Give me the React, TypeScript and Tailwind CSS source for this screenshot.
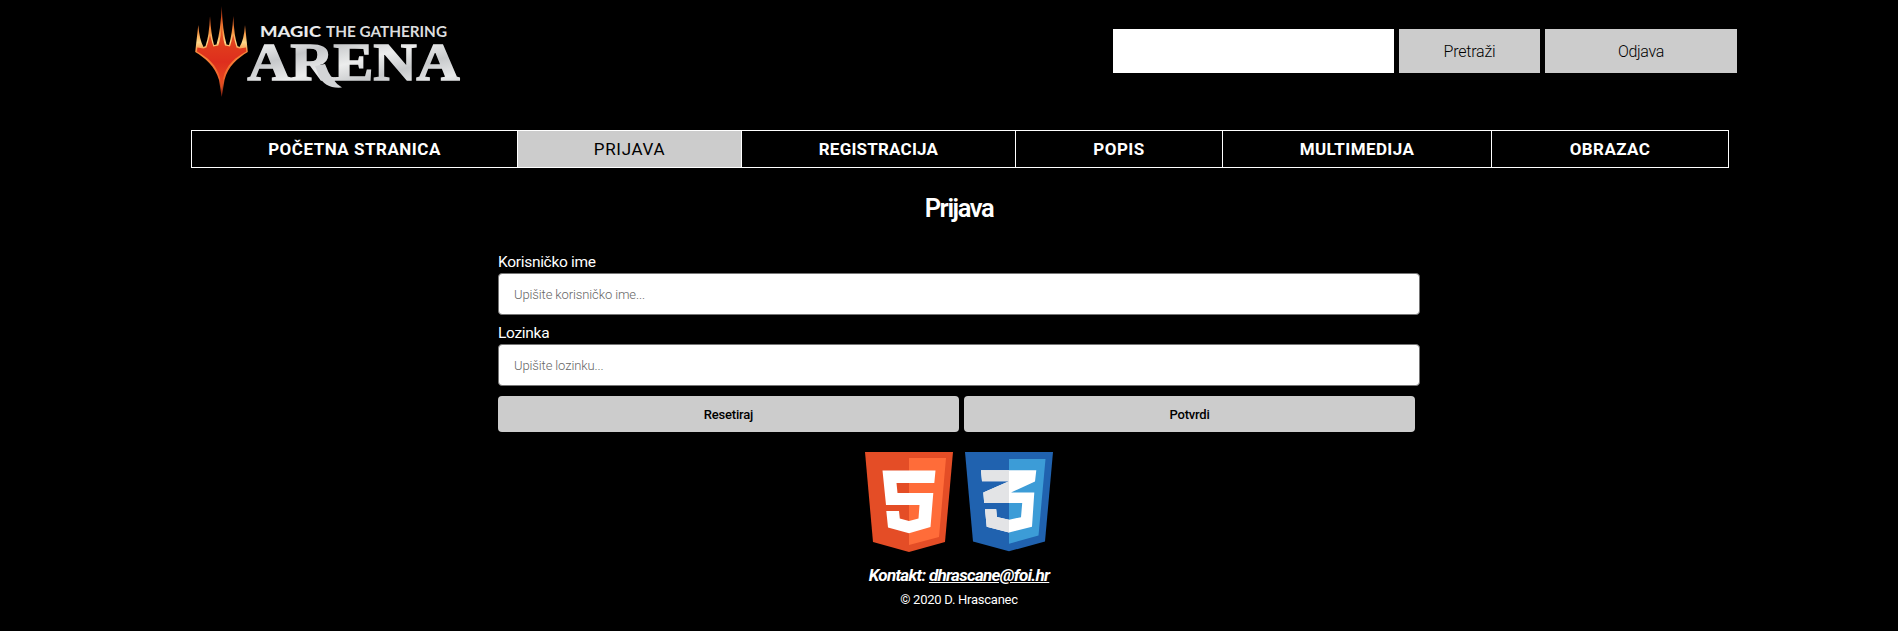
const navItems = [
  { label: 'POČETNA STRANICA', width: 'w-[326px]', spacing: 'tracking-[0.5px]' },
  { label: 'PRIJAVA', width: 'w-[224px]', active: true, spacing: 'tracking-[0.7px]' },
  { label: 'REGISTRACIJA', width: 'w-[274px]', spacing: 'tracking-[0.2px]' },
  { label: 'POPIS', width: 'w-[207px]', spacing: 'tracking-[0.5px]' },
  { label: 'MULTIMEDIJA', width: 'w-[269px]', spacing: 'tracking-[0.4px]' },
  { label: 'OBRAZAC', width: 'w-[237px]', spacing: 'tracking-[0.4px]' },
];

function Logo() {
  return (
    <svg width="285" height="105" viewBox="0 0 285 105" role="img" aria-label="Magic The Gathering Arena">
      <defs>
        <linearGradient id="flame" gradientUnits="userSpaceOnUse" x1="0" y1="6" x2="0" y2="97">
          <stop offset="0" stopColor="#8c2410" />
          <stop offset="0.14" stopColor="#d9501c" />
          <stop offset="0.3" stopColor="#f79a45" />
          <stop offset="0.4" stopColor="#ffd98a" />
          <stop offset="0.5" stopColor="#f68a3c" />
          <stop offset="0.8" stopColor="#f0602a" />
          <stop offset="1" stopColor="#7c1c0e" />
        </linearGradient>
        <linearGradient id="ember" gradientUnits="userSpaceOnUse" x1="0" y1="20" x2="0" y2="90">
          <stop offset="0" stopColor="#ee6a26" />
          <stop offset="0.4" stopColor="#e03a1d" />
          <stop offset="0.6" stopColor="#de2e1d" />
          <stop offset="1" stopColor="#e9521f" />
        </linearGradient>
        <linearGradient id="steel" x1="0" y1="0" x2="1" y2="1">
          <stop offset="0" stopColor="#c9cbcd" />
          <stop offset="0.15" stopColor="#e9eaeb" />
          <stop offset="0.3" stopColor="#c6c8ca" />
          <stop offset="0.5" stopColor="#eceded" />
          <stop offset="0.68" stopColor="#c8cacc" />
          <stop offset="0.85" stopColor="#e8e9ea" />
          <stop offset="1" stopColor="#c4c6c8" />
        </linearGradient>
      </defs>
      <path
        d="M36.700 6 Q37.500 30 41.500 44.500 L44 45 Q47.300 34 48.300 16 Q49 36 52.500 46 L54.500 47 Q59 40 60 25 L62.800 52 C53 58 43 66 39.500 80 L36.700 97 L34 80 C30 66 20 58 10.200 52 L13.300 25 Q14.500 40 18.500 47 L20.500 46 Q24.200 36 25 16 Q26 34 29 45 L31.500 44.500 Q35.800 30 36.700 6 Z"
        fill="url(#flame)"
      />
      <path
        d="M36.700 24 Q37.500 38 40 45.500 L45 46.500 L48.200 35 L51.500 47.500 L54.500 48.500 L61 47.500 L61.300 51.500 C51 57 41 65 38.300 78 L36.700 90 L35 78 C32 65 22 57 12 51.500 L12.300 47.500 L18.500 48.500 L21.500 47.500 L25 35 L28.300 46.500 L33.300 45.500 Q36 38 36.700 24 Z"
        fill="url(#ember)"
      />
      <text x="75" y="36.500" textLength="61" lengthAdjust="spacingAndGlyphs" fontFamily="Lato, sans-serif" fontWeight="900" fontSize="14.500" fill="#e9eaeb">
        MAGIC
      </text>
      <text x="141" y="36.500" textLength="121" lengthAdjust="spacingAndGlyphs" fontFamily="Lato, sans-serif" fontWeight="700" fontSize="14.500" fill="#dcddde">
        THE GATHERING
      </text>
      <text x="62.500" y="79.500" textLength="212" lengthAdjust="spacingAndGlyphs" fontFamily="'Liberation Serif', serif" fontWeight="700" fontSize="52" fill="url(#steel)" stroke="url(#steel)" strokeWidth="1.6">
        ARENA
      </text>
      <path d="M130 66 L140 64 Q146 81 157 87.500 Q140 89 134 76 Z" fill="#d3d5d7" />
    </svg>
  );
}

function Html5Badge() {
  return (
    <svg width="88" height="100" viewBox="0 0 88 100" aria-label="HTML5">
      <path d="M0 0H88L80 90L44 100L8 90Z" fill="#e44d26" />
      <path d="M44 6H81L74 85L44 93Z" fill="#ff6c39" />
      <path d="M17.500 18.500H70.500L69.300 31H31.500L32.500 41H68.300L65.500 75L44 81.300L23 75.500L21.300 59H34L34.800 66.500L44 69L53.500 66.500L54.500 53H21Z" fill="#fff" />
    </svg>
  );
}

function Css3Badge() {
  const emblem =
    'M16 18.300H71.300L70 29.500L46 40.500H69.300L67 74.700L44 80.600L21.700 74.700L20 57.300H31.200L31.900 65L44 67.800L56 65.200L57.200 51H19.200L18.300 40.500L44 29.300H17Z';
  return (
    <svg width="88" height="100" viewBox="0 0 88 100" aria-label="CSS3">
      <clipPath id="left-half">
        <path d="M0 0H44V100H0Z" />
      </clipPath>
      <path d="M0 0H88L80 89.500L44 99.300L8 89.500Z" fill="#2062af" />
      <path d="M44 7H80.500L73.500 83.500L44 91.800Z" fill="#3c9cd7" />
      <path d={emblem} fill="#fff" />
      <path d={emblem} fill="#e3e4e6" clipPath="url(#left-half)" />
    </svg>
  );
}

const fieldClass =
  'block h-[42px] w-full rounded-[4px] border border-[#767676] bg-white px-[15px] text-[13px] font-light tracking-[-0.12px] text-black placeholder:text-[#666]';

export default function App() {
  return (
    <div className="h-[631px] overflow-hidden bg-black font-['Roboto','Noto_Sans',sans-serif] text-white">
      <header className="flex h-[130px] items-start justify-between pl-[185px] pr-[161px]">
        <Logo />
        <form className="mt-[29px] flex h-[44px] gap-[5px] text-[16px] font-light text-black" onSubmit={(e) => e.preventDefault()}>
          <input aria-label="Pretraživanje" className="w-[281px] bg-white px-3" />
          <button className="w-[141px] bg-[#ccc] pt-[2px] tracking-[-0.2px]">Pretraži</button>
          <button type="button" className="w-[192px] bg-[#ccc] pt-[2px] tracking-[-0.3px]">Odjava</button>
        </form>
      </header>

      <nav className="ml-[191px] flex h-[38px] w-[1538px] border border-r-0 border-white">
        {navItems.map((item) => (
          <a
            key={item.label}
            href="#"
            className={`flex items-center justify-center border-r border-white pt-[2px] text-[17px] ${item.width} ${item.spacing} ${
              item.active ? 'bg-[#ccc] font-normal text-black' : 'font-bold'
            }`}
          >
            {item.label}
          </a>
        ))}
      </nav>

      <main className="ml-[498px] w-[922px]">
        <h1 className="pt-[21px] text-center text-[25.500px] font-semibold leading-[38px] tracking-[-1.4px]">Prijava</h1>
        <form className="pt-[22px]" onSubmit={(e) => e.preventDefault()}>
          <label className="block h-[24px] text-[15.500px] leading-[26px] tracking-[-0.3px]" htmlFor="user">Korisničko ime</label>
          <input id="user" className={fieldClass} placeholder="Upišite korisničko ime..." />
          <label className="mt-[5px] block h-[24px] text-[15.500px] leading-[26px] tracking-[-0.3px]" htmlFor="pass">Lozinka</label>
          <input id="pass" type="password" className={fieldClass} placeholder="Upišite lozinku..." />
          <div className="mt-[10px] flex h-[36px] gap-[5px] text-[13px] font-medium tracking-[-0.2px] text-black">
            <button type="reset" className="w-[461px] rounded-[4px] bg-[#ccc] pt-px">Resetiraj</button>
            <button className="w-[451px] rounded-[4px] bg-[#ccc] pt-px">Potvrdi</button>
          </div>
        </form>
      </main>

      <footer className="ml-[498px] flex w-[922px] flex-col items-center pt-[20px]">
        <div className="flex gap-[12px]">
          <Html5Badge />
          <Css3Badge />
        </div>
        <address className="mt-[11px] text-[17px] font-bold italic leading-[24px] tracking-[-0.7px]">
          Kontakt: <a href="#" className="underline">dhrascane@foi.hr</a>
        </address>
        <p className="mt-[2px] text-[13px] leading-[22px] tracking-[-0.25px]">© 2020 D. Hrascanec</p>
      </footer>
    </div>
  );
}
